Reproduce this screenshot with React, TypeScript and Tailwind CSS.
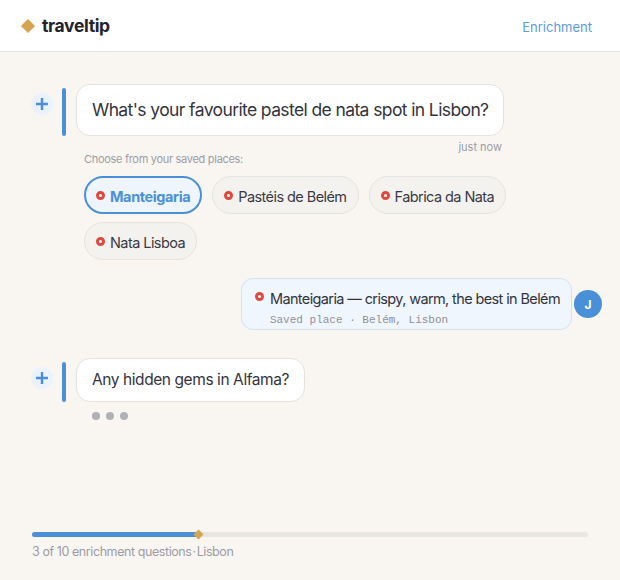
const sans = "font-['Inter','Noto_Sans',sans-serif]";

function Pin({ className }: { className?: string }) {
  return (
    <svg width="9" height="9" viewBox="0 0 9 9" className={`shrink-0 ${className ?? ""}`} aria-hidden="true">
      <circle cx="4.5" cy="4.5" r="3" fill="#fff" stroke="#e0483e" strokeWidth="3" />
    </svg>
  );
}

function Chip({ label, active }: { label: string; active?: boolean }) {
  return (
    <button
      type="button"
      className={
        active
          ? "flex h-[38px] items-center gap-[5px] rounded-full border-2 border-[#4a90d9] bg-[#eef5fd] px-[10px] text-[14.5px] font-bold tracking-[-0.4px] text-[#4a90d9]"
          : "flex h-[38px] items-center gap-[5px] rounded-full border border-[#e5e3df] bg-[#f4f2ef] px-[11px] text-[14.5px] tracking-[-0.57px] text-[#3a3a44]"
      }
    >
      <Pin />
      <span className="pt-[3px]">{label}</span>
    </button>
  );
}

function Question({ text, big }: { text: string; big?: boolean }) {
  return (
    <div className="flex items-start">
      <span className="mt-[9px] flex size-[22px] items-center justify-center rounded-full bg-[#e9f2fd]">
        <svg width="14" height="14" viewBox="0 0 14 14" aria-hidden="true">
          <path d="M7 1v12M1 7h12" stroke="#4a90d9" strokeWidth="2.4" />
        </svg>
      </span>
      <span className={big ? "ml-[9px] mt-1 h-12 w-1 rounded-full bg-[#4a90d9]" : "ml-[9px] mt-1 h-10 w-1 rounded-full bg-[#4a90d9]"} />
      <div
        className={
          big
            ? "ml-[10px] flex h-[52px] items-center rounded-[14px] border border-[#e6e3de] bg-white px-[15px] text-[17.5px] tracking-[-0.61px] text-[#33333d]"
            : "ml-[10px] flex h-[44px] items-center rounded-[14px] border border-[#e6e3de] bg-white px-[15px] text-[15.5px] tracking-[-0.42px] text-[#33333d]"
        }
      >
        {text}
      </div>
    </div>
  );
}

export default function App() {
  return (
    <div className={`flex h-[580px] w-[620px] flex-col bg-[#f9f6f2] ${sans}`}>
      <header className="flex h-[52px] shrink-0 items-center justify-between border-b border-[#e4e2de] bg-white pl-[21px] pr-[28px]">
        <div className="flex items-center gap-[7px]">
          <span className="mx-[2px] size-[10px] rotate-45 bg-[#d4a44f]" />
          <span className="pt-[2px] text-[17.5px] font-bold tracking-[-0.35px] text-[#23232d]">traveltip</span>
        </div>
        <a className="pt-[5px] text-[13px] text-[#5a9be0]">Enrichment</a>
      </header>

      <main className="flex flex-1 flex-col pl-[31px] pr-[18px] pt-8">
        <Question text="What's your favourite pastel de nata spot in Lisbon?" big />
        <p className="mr-[100px] mt-[3px] text-right text-[11px] leading-4 text-[#9c9ca4]">just now</p>
        <p className="ml-[53px] -mt-1 text-[11px] leading-4 tracking-[-0.3px] text-[#9c9ca4]">Choose from your saved places:</p>
        <div className="ml-[53px] mt-[9px] flex w-[440px] flex-wrap gap-x-[10px] gap-y-[8px]">
          <Chip label="Manteigaria" active />
          <Chip label="Pastéis de Belém" />
          <Chip label="Fabrica da Nata" />
          <Chip label="Nata Lisboa" />
        </div>

        <div className="mt-[18px] flex items-center justify-end gap-[2px]">
          <div className="h-[52px] rounded-[12px] border border-[#cfe2f6] bg-[#eff6fd] pl-[13px] pr-[11px] pt-[10px]">
            <div className="flex items-start gap-[5.5px] text-[14.5px] leading-[20px] tracking-[-0.62px] text-[#33333d]">
              <Pin className="mt-[2.5px]" />
              Manteigaria — crispy, warm, the best in Belém
            </div>
            <div className="ml-[14.5px] mt-[4px] font-['Liberation_Mono',monospace] text-[11px] leading-[14px] text-[#8f8f98]">
              Saved place · Belém, Lisbon
            </div>
          </div>
          <span className="flex size-[28px] items-center justify-center rounded-full bg-[#4a90d9] pt-[2px] text-[12px] font-bold text-white">
            J
          </span>
        </div>

        <div className="mt-7">
          <Question text="Any hidden gems in Alfama?" />
        </div>
        <div className="ml-[61px] mt-[10px] flex gap-[6px]">
          <span className="size-2 rounded-full bg-[#b0b0b6]" />
          <span className="size-2 rounded-full bg-[#b0b0b6]" />
          <span className="size-2 rounded-full bg-[#b0b0b6]" />
        </div>

        <div className="mt-auto pb-[18px] pl-px">
          <div className="relative h-[5px] w-[556px] rounded-full bg-[#e8e6e1]">
            <div className="h-[5px] w-[167px] rounded-full bg-[#4a90d9]" />
            <span className="absolute left-[163px] top-[-1px] size-[7px] rotate-45 bg-[#d4a44f]" />
          </div>
          <p className="mt-[6px] text-[12.5px] tracking-[-0.42px] text-[#9c9ca4]">
            3 of 10 enrichment questions<span className="mx-[1px]">·</span>Lisbon
          </p>
        </div>
      </main>
    </div>
  );
}
